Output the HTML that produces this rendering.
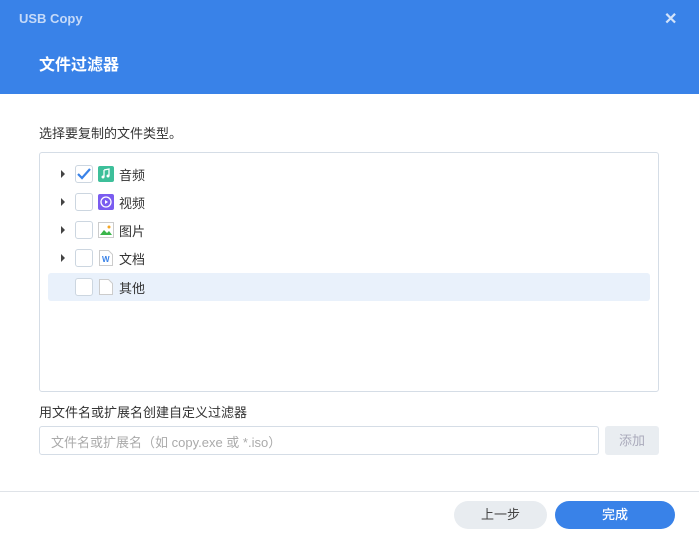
<!DOCTYPE html>
<html><head><meta charset="utf-8"><style>
*{margin:0;padding:0;box-sizing:border-box}
body{width:699px;height:538px;background:#fff;font-family:"Liberation Sans","Noto Sans CJK SC",sans-serif;position:relative;overflow:hidden;color:#333}
.hdr{position:absolute;left:0;top:0;width:699px;height:94px;background:#3982e8}
.t1{position:absolute;left:19px;top:11px;font-size:13px;font-weight:bold;color:#c6daf8}
.x{position:absolute;left:664px;top:9px;font-size:16px;font-weight:bold;color:#d3e3fa}
.t2{position:absolute;left:39px;top:51px;font-size:16px;font-weight:bold;color:#fff}
.lbl{position:absolute;font-size:13px;color:#333}
.box{position:absolute;left:39px;top:152px;width:620px;height:240px;border:1px solid #d5dde6;border-radius:3px}
.row{position:absolute;left:8px;width:602px;height:28px}
.row.sel{background:#e9f1fb;border-radius:3px}
.tri{position:absolute;left:13px;top:10px;width:0;height:0;border-left:4px solid #444;border-top:4px solid transparent;border-bottom:4px solid transparent}
.cb{position:absolute;left:27px;top:5px;width:18px;height:18px;border:1px solid #ccd6e0;border-radius:3px;background:#fff}
.ic{position:absolute;left:50px;top:6px;width:16px;height:16px}
.tx{position:absolute;left:71px;top:5px;font-size:13px}
.inp{position:absolute;left:39px;top:426px;width:560px;height:29px;border:1px solid #d5dde6;border-radius:3px;font-size:13px;color:#aaa;padding:5px 11px}
.add{position:absolute;left:605px;top:426px;width:54px;height:29px;background:#e9edf1;border-radius:3px;font-size:13px;color:#aab;text-align:center;line-height:29px}
.line{position:absolute;left:0;top:491px;width:699px;height:1px;background:#dfe3e8}
.b1{position:absolute;left:454px;top:501px;width:93px;height:28px;border-radius:14px;background:#e8ecf0;font-size:13px;text-align:center;line-height:28px;color:#444}
.b2{position:absolute;left:555px;top:501px;width:120px;height:28px;border-radius:14px;background:#3982e8;font-size:13px;text-align:center;line-height:28px;color:#fff;font-weight:500}
</style></head><body>
<div class="hdr"><div class="t1">USB Copy</div><div class="x">✕</div><div class="t2">文件过滤器</div></div>
<div class="lbl" style="left:39px;top:123px">选择要复制的文件类型。</div>
<div class="box">
<div class="row" style="top:7px"><div class="tri"></div><div class="cb"><svg width="16" height="16" viewBox="0 0 16 16"><path d="M2 8l4 4 8-9" stroke="#3982e8" stroke-width="2.2" fill="none"/></svg></div>
<svg class="ic" viewBox="0 0 16 16"><rect width="16" height="16" rx="2" fill="#3dbf9a"/><path d="M6 4v7M6 4l5-1v7" stroke="#fff" stroke-width="1.3" fill="none"/><circle cx="5" cy="11" r="1.5" fill="#fff"/><circle cx="10" cy="10" r="1.5" fill="#fff"/></svg><div class="tx">音频</div></div>
<div class="row" style="top:35px"><div class="tri"></div><div class="cb"></div>
<svg class="ic" viewBox="0 0 16 16"><rect width="16" height="16" rx="2" fill="#7a5cf0"/><circle cx="8" cy="8" r="5" stroke="#fff" stroke-width="1.3" fill="none"/><path d="M7 6v4l3-2z" fill="#fff"/></svg><div class="tx">视频</div></div>
<div class="row" style="top:63px"><div class="tri"></div><div class="cb"></div>
<svg class="ic" viewBox="0 0 16 16"><rect x=".5" y=".5" width="15" height="15" fill="#fff" stroke="#ccc"/><path d="M2 13l4-5 3 3 2-2 3 4z" fill="#3ab54a"/><circle cx="11" cy="5" r="1.5" fill="#f5a623"/></svg><div class="tx">图片</div></div>
<div class="row" style="top:91px"><div class="tri"></div><div class="cb"></div>
<svg class="ic" viewBox="0 0 16 16"><path d="M1.5.5h9l4 4v11h-13z" fill="#fff" stroke="#ccc"/><text x="4" y="12" font-size="8" font-weight="bold" fill="#3982e8" font-family="Liberation Sans">W</text></svg><div class="tx">文档</div></div>
<div class="row sel" style="top:120px"><div class="cb"></div>
<svg class="ic" viewBox="0 0 16 16"><path d="M1.5.5h9l4 4v11h-13z" fill="#fff" stroke="#ccc"/></svg><div class="tx">其他</div></div>
</div>
<div class="lbl" style="left:39px;top:402px">用文件名或扩展名创建自定义过滤器</div>
<div class="inp">文件名或扩展名（如 copy.exe 或 *.iso）</div>
<div class="add">添加</div>
<div class="line"></div>
<div class="b1">上一步</div><div class="b2">完成</div>
</body></html>
